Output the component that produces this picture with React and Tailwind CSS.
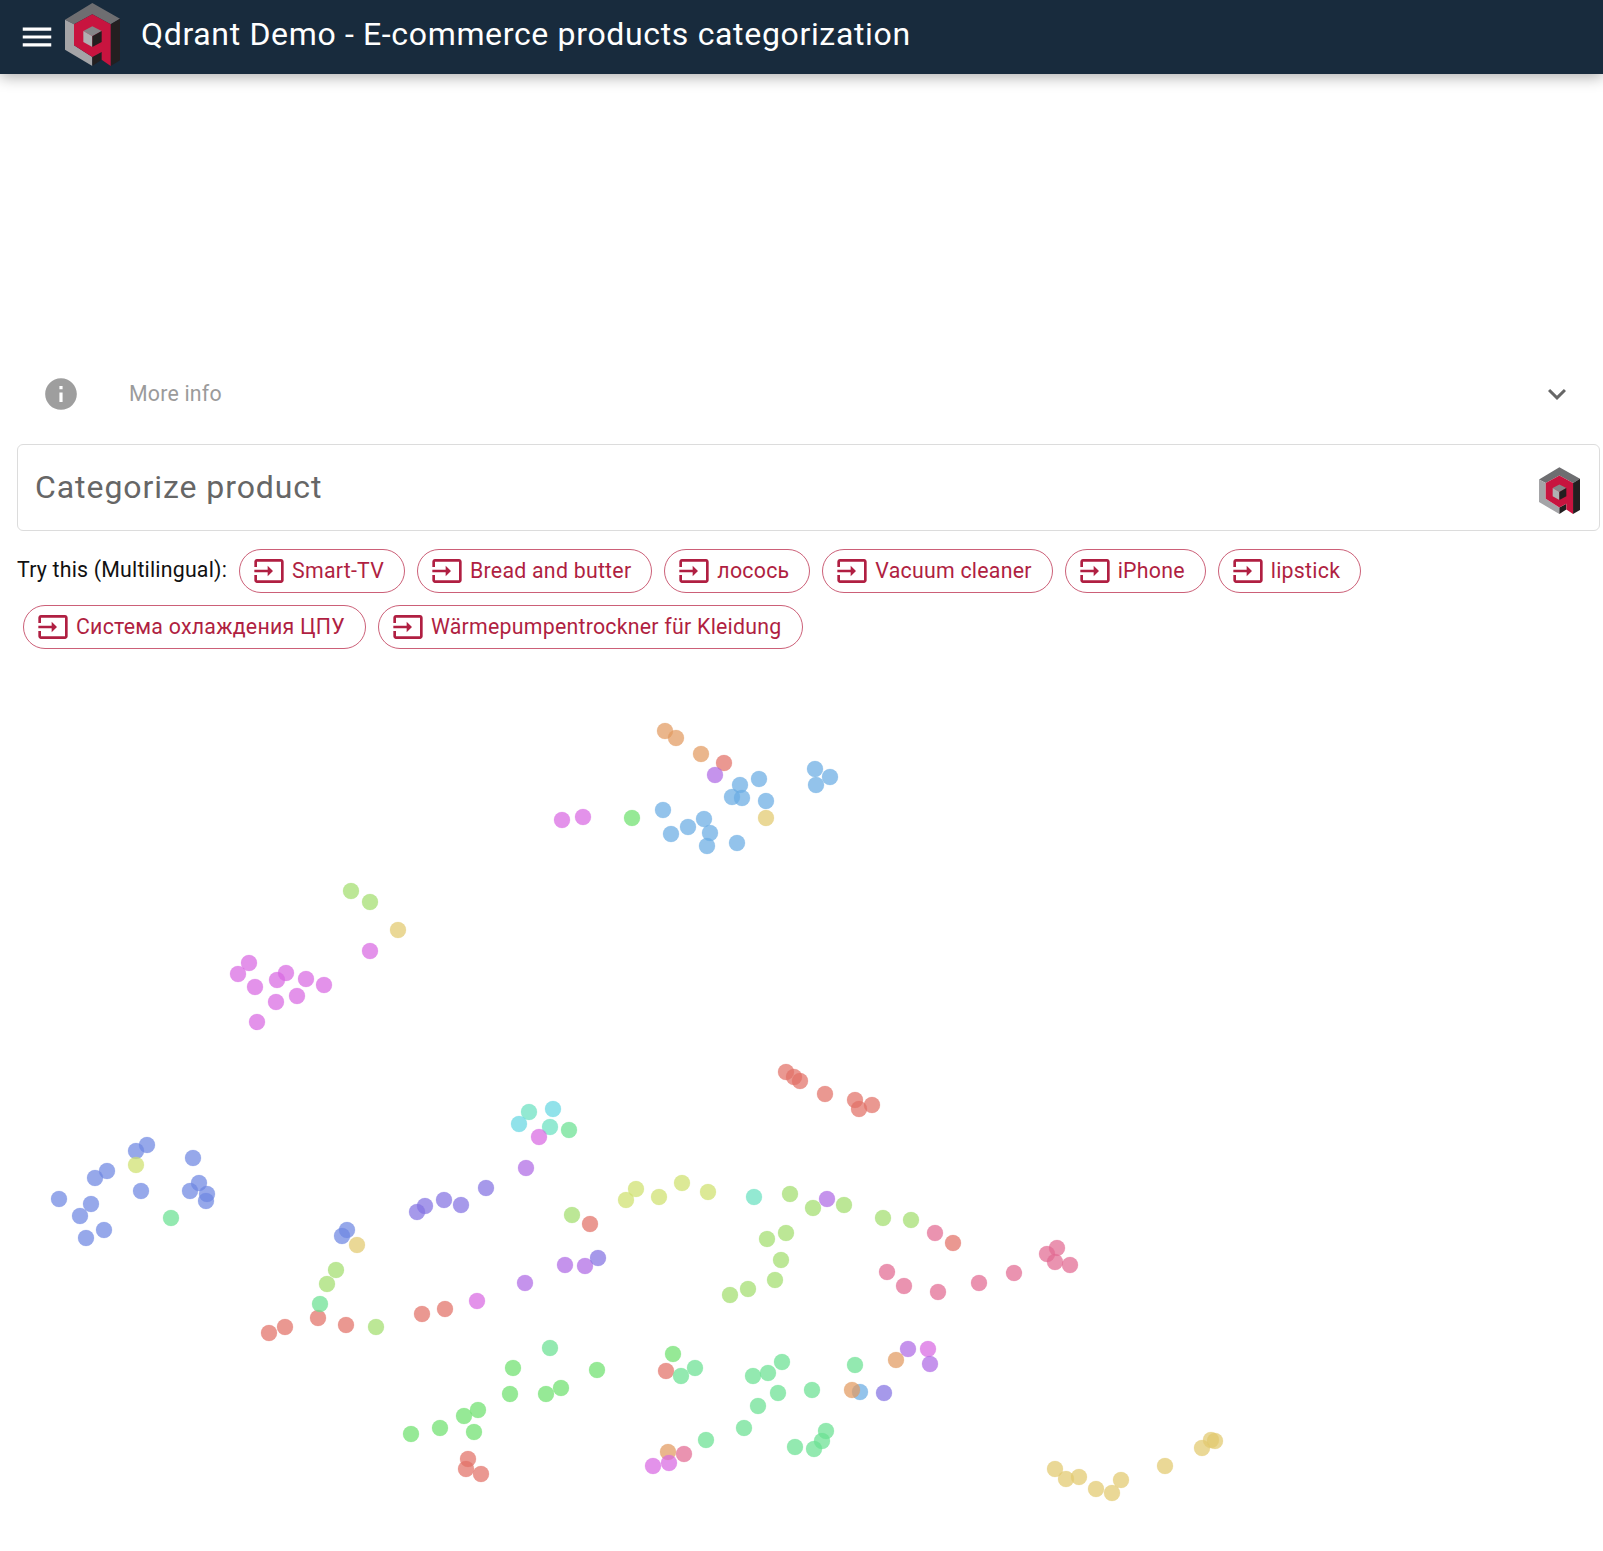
const palette = {
  blue: "#6aace3", orange: "#e29a60", red: "#e27066", purple: "#af6ae5", yellow: "#e2c96d",
  lime: "#a2de6d", olive: "#cee06d", green: "#6de06d", mint: "#6ae092", teal: "#6ae0c0",
  cyan: "#66d7e2", pink: "#e26a92", violet: "#8372e2", magenta: "#d868e2", indigo: "#6d87e2",
};

const dots = [
  ["orange", 665, 731], ["orange", 676, 738], ["orange", 701, 754], ["red", 724, 763], ["purple", 715, 775],
  ["blue", 759, 779], ["blue", 740, 785], ["blue", 732, 797], ["blue", 742, 798], ["blue", 766, 801],
  ["blue", 663, 810], ["blue", 704, 819], ["blue", 688, 827], ["blue", 671, 834], ["blue", 710, 833],
  ["blue", 707, 846], ["blue", 737, 843], ["blue", 815, 769], ["blue", 830, 777], ["blue", 816, 785],
  ["yellow", 766, 818], ["magenta", 562, 820], ["magenta", 583, 817], ["green", 632, 818],
  ["lime", 351, 891], ["lime", 370, 902], ["yellow", 398, 930], ["magenta", 370, 951],
  ["magenta", 249, 963], ["magenta", 238, 974], ["magenta", 255, 987], ["magenta", 277, 980], ["magenta", 286, 973],
  ["magenta", 306, 979], ["magenta", 324, 985], ["magenta", 297, 996], ["magenta", 276, 1002], ["magenta", 257, 1022],
  ["indigo", 147, 1145], ["indigo", 136, 1151], ["indigo", 107, 1171], ["indigo", 95, 1178], ["indigo", 59, 1199],
  ["indigo", 91, 1204], ["indigo", 80, 1216], ["indigo", 86, 1238], ["indigo", 104, 1230], ["indigo", 141, 1191],
  ["indigo", 193, 1158], ["indigo", 199, 1183], ["indigo", 190, 1191], ["indigo", 207, 1194], ["indigo", 206, 1201],
  ["olive", 136, 1165], ["mint", 171, 1218], ["indigo", 347, 1230], ["indigo", 342, 1236], ["yellow", 357, 1245],
  ["teal", 529, 1112], ["cyan", 553, 1109], ["cyan", 519, 1124], ["teal", 550, 1127], ["mint", 569, 1130],
  ["magenta", 539, 1137], ["purple", 526, 1168], ["violet", 486, 1188], ["violet", 461, 1205], ["violet", 444, 1200],
  ["violet", 425, 1206], ["violet", 417, 1212], ["lime", 572, 1215], ["red", 590, 1224], ["purple", 565, 1265],
  ["purple", 585, 1266], ["violet", 598, 1258], ["purple", 525, 1283], ["magenta", 477, 1301], ["red", 445, 1309],
  ["red", 422, 1314], ["lime", 376, 1327], ["red", 346, 1325], ["red", 318, 1318], ["red", 285, 1327], ["red", 269, 1333],
  ["mint", 320, 1304], ["lime", 327, 1284], ["lime", 336, 1270], ["mint", 550, 1348], ["green", 513, 1368],
  ["green", 597, 1370], ["green", 510, 1394], ["green", 546, 1394], ["green", 561, 1388], ["green", 478, 1410],
  ["green", 464, 1416], ["green", 474, 1432], ["green", 440, 1428], ["green", 411, 1434], ["red", 468, 1459],
  ["red", 466, 1469], ["red", 481, 1474],
  ["red", 786, 1072], ["red", 794, 1077], ["red", 800, 1081], ["red", 825, 1094], ["red", 855, 1100], ["red", 859, 1109], ["red", 872, 1105],
  ["olive", 626, 1200], ["olive", 636, 1189], ["olive", 659, 1197], ["olive", 682, 1183], ["olive", 708, 1192],
  ["teal", 754, 1197], ["lime", 790, 1194], ["lime", 813, 1208], ["purple", 827, 1199], ["lime", 844, 1205],
  ["lime", 883, 1218], ["lime", 911, 1220], ["pink", 935, 1233], ["red", 953, 1243], ["lime", 786, 1233],
  ["lime", 767, 1239], ["lime", 781, 1260], ["lime", 775, 1280], ["lime", 748, 1289], ["lime", 730, 1295],
  ["pink", 887, 1272], ["pink", 904, 1286], ["pink", 938, 1292], ["pink", 979, 1283], ["pink", 1014, 1273],
  ["pink", 1047, 1254], ["pink", 1057, 1248], ["pink", 1055, 1262], ["pink", 1070, 1265],
  ["purple", 908, 1349], ["magenta", 928, 1349], ["purple", 930, 1364], ["orange", 896, 1360],
  ["green", 673, 1354], ["red", 666, 1371], ["mint", 681, 1376], ["mint", 695, 1368], ["mint", 753, 1376],
  ["mint", 768, 1373], ["mint", 782, 1362], ["mint", 855, 1365], ["mint", 778, 1393], ["mint", 812, 1390],
  ["mint", 758, 1406], ["mint", 744, 1428], ["mint", 706, 1440], ["mint", 826, 1431], ["mint", 822, 1441],
  ["mint", 814, 1449], ["mint", 795, 1447], ["blue", 860, 1392], ["orange", 852, 1390], ["violet", 884, 1393],
  ["orange", 668, 1452], ["magenta", 669, 1463], ["pink", 684, 1454], ["magenta", 653, 1466],
  ["yellow", 1055, 1469], ["yellow", 1066, 1479], ["yellow", 1079, 1477], ["yellow", 1096, 1489], ["yellow", 1112, 1493],
  ["yellow", 1121, 1480], ["yellow", 1165, 1466], ["yellow", 1202, 1448], ["yellow", 1211, 1440], ["yellow", 1215, 1441],
];

const chips = [
  "Smart-TV", "Bread and butter", "лосось", "Vacuum cleaner", "iPhone", "lipstick",
  "Система охлаждения ЦПУ", "Wärmepumpentrockner für Kleidung",
];

function Logo({ className }) {
  return (
    <svg viewBox="195 8 165 192" className={className}>
      <polygon points="277,8 360,55 332,72 277,42 222,72 195,58" fill="#6e6e71" />
      <polygon points="195,58 222,72 222,135 277,170 277,197 195,148" fill="#a4a4a7" />
      <polygon points="332,72 360,55 360,180 332,197" fill="#231f20" />
      <polygon points="277,170 305,155 305,178 277,197" fill="#231f20" />
      <polygon points="277,42 332,72 332,197 305,178 305,155 277,170 222,135 222,72" fill="#c8143f" />
      <polygon points="277,78 305,92 277,108 250,92" fill="#858588" />
      <polygon points="250,92 277,108 277,140 250,125" fill="#b0b0b3" />
      <polygon points="305,92 305,125 277,140 277,108" fill="#231f20" />
    </svg>
  );
}

function Chip({ label }) {
  return (
    <button className="m-[6px] flex h-[44px] items-center gap-[7px] rounded-[22px] border border-[#cc6078] pl-[13px] pr-[20px] text-[21.33px] leading-none tracking-[0.24px] text-[#b01f42]">
      <svg viewBox="0 0 24 24" className="h-[32px] w-[32px]" fill="currentColor">
        <path d="M21 3.01H3c-1.1 0-2 .9-2 2V9h2V4.99h18v14.03H3V15H1v4.01c0 1.1.9 1.98 2 1.98h18c1.1 0 2-.88 2-1.98v-14c0-1.11-.9-2-2-2zM11 16l4-4-4-4v3H1v2h10v3z" />
      </svg>
      {label}
    </button>
  );
}

export default function App() {
  return (
    <div className="w-[1603px] overflow-hidden bg-white font-['Roboto',sans-serif]">
      <header className="relative flex h-[74px] items-center bg-[#182b3d] shadow-[0_3px_14px_rgba(0,0,0,0.32)]">
        <svg viewBox="0 0 24 24" className="ml-[18px] h-[38px] w-[38px]" fill="white">
          <path d="M3 18h18v-2H3v2zm0-5h18v-2H3v2zm0-7v2h18V6H3z" />
        </svg>
        <Logo className="ml-[9px] h-[64px] w-[55px] -translate-y-[2px]" />
        <h1 className="ml-[21px] -translate-y-[3px] text-[32px] font-normal tracking-[0.66px] text-white">
          Qdrant Demo - E-commerce products categorization
        </h1>
      </header>

      <div className="h-[291px]" />

      <div className="mb-[22px] flex h-[57px] items-center pl-[42px] pr-[28px]">
        <svg viewBox="0 0 24 24" className="h-[38px] w-[38px]" fill="#9e9e9e">
          <path d="M12 2C6.48 2 2 6.48 2 12s4.48 10 10 10 10-4.48 10-10S17.52 2 12 2zm1 15h-2v-6h2v6zm0-8h-2V7h2v2z" />
        </svg>
        <span className="ml-[49px] flex-1 text-[21.33px] tracking-[0.2px] text-[#9b9b9b]">More info</span>
        <svg viewBox="0 0 24 24" className="h-[36px] w-[36px]" fill="#666666">
          <path d="M16.59 8.59L12 13.17 7.41 8.59 6 10l6 6 6-6z" />
        </svg>
      </div>

      <div className="ml-[17px] flex h-[87px] w-[1583px] items-center rounded-[6px] border border-[#dcdcdc] pl-[17px] pr-[19px]">
        <input
          placeholder="Categorize product"
          className="flex-1 -translate-y-[1px] bg-transparent text-[32px] tracking-[0.93px] outline-none placeholder:text-[#666666]"
        />
        <Logo className="h-[48px] w-[41px] translate-y-[3px]" />
      </div>

      <div className="mt-[12px] flex flex-wrap items-center pl-[17px]">
        <span className="mr-[6px] -translate-y-[1px] text-[21.33px] tracking-[0.2px] text-[#111111]">Try this (Multilingual):</span>
        {chips.map((c) => (
          <Chip key={c} label={c} />
        ))}
      </div>

      <svg viewBox="0 655 1603 896" className="block h-[896px] w-[1603px]">
        {dots.map(([c, x, y], i) => (
          <circle key={i} cx={x} cy={y} r="8" fill={palette[c]} fillOpacity="0.72" stroke={palette[c]} strokeOpacity="0.2" strokeWidth="1" />
        ))}
      </svg>
    </div>
  );
}
